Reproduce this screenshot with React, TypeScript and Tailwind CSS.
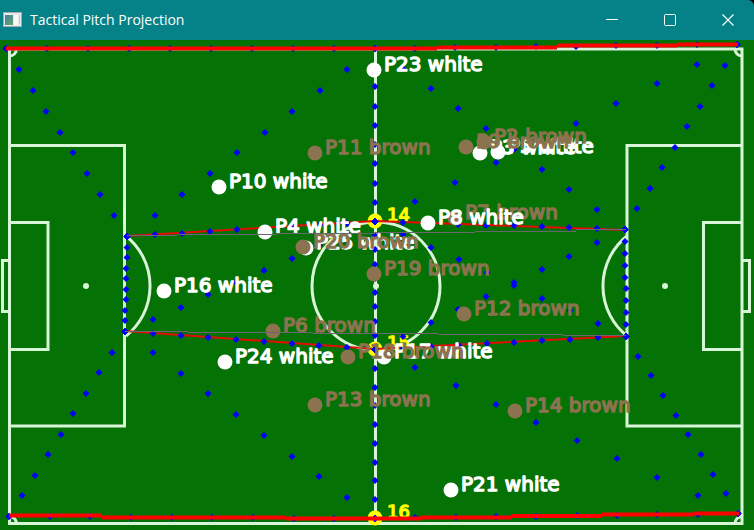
type Point = [number, number];

type Player = { id: number; team: "white" | "brown"; x: number; y: number };

const TOP_LEFT: Point = [6, 48];
const TOP_MID: Point = [375, 48];
const TOP_RIGHT: Point = [737, 44];
const BOX_LEFT_TOP: Point = [127, 236];
const BOX_LEFT_BOTTOM: Point = [125, 331];
const BOX_RIGHT_TOP: Point = [625, 229];
const BOX_RIGHT_BOTTOM: Point = [626, 336];
const CIRCLE_TOP: Point = [375, 221];
const CIRCLE_BOTTOM: Point = [375, 349];
const BOTTOM_LEFT: Point = [9, 516];
const BOTTOM_MID: Point = [375, 518];
const BOTTOM_RIGHT: Point = [738, 513];

// Pairs of keypoints joined by evenly spaced blue markers.
const EDGES: [Point, Point][] = [
  [TOP_LEFT, TOP_MID],
  [TOP_MID, TOP_RIGHT],
  [TOP_LEFT, BOX_LEFT_TOP],
  [TOP_MID, BOX_LEFT_TOP],
  [TOP_MID, BOX_RIGHT_TOP],
  [TOP_RIGHT, CIRCLE_TOP],
  [TOP_RIGHT, BOX_RIGHT_TOP],
  [TOP_MID, CIRCLE_TOP],
  [CIRCLE_TOP, CIRCLE_BOTTOM],
  [CIRCLE_BOTTOM, BOTTOM_MID],
  [BOX_LEFT_TOP, BOX_LEFT_BOTTOM],
  [BOX_RIGHT_TOP, BOX_RIGHT_BOTTOM],
  [BOX_LEFT_TOP, CIRCLE_TOP],
  [BOX_LEFT_BOTTOM, CIRCLE_TOP],
  [BOX_LEFT_BOTTOM, CIRCLE_BOTTOM],
  [BOX_LEFT_BOTTOM, BOTTOM_MID],
  [BOX_LEFT_BOTTOM, BOTTOM_LEFT],
  [CIRCLE_TOP, BOX_RIGHT_TOP],
  [CIRCLE_TOP, BOX_RIGHT_BOTTOM],
  [CIRCLE_BOTTOM, BOX_RIGHT_TOP],
  [CIRCLE_BOTTOM, BOX_RIGHT_BOTTOM],
  [CIRCLE_BOTTOM, BOTTOM_RIGHT],
  [BOX_RIGHT_BOTTOM, BOTTOM_RIGHT],
  [BOTTOM_LEFT, BOTTOM_MID],
  [BOTTOM_MID, BOTTOM_RIGHT],
];

const STEPS = 9;

const MARKERS: Point[] = EDGES.flatMap(([a, b]) =>
  Array.from({ length: STEPS + 1 }, (_, i): Point => [
    Math.round(a[0] + ((b[0] - a[0]) * i) / STEPS),
    Math.round(a[1] + ((b[1] - a[1]) * i) / STEPS),
  ]),
);

const KEYPOINTS = [
  { id: 14, at: CIRCLE_TOP },
  { id: 15, at: CIRCLE_BOTTOM },
  { id: 16, at: BOTTOM_MID },
];

const PLAYERS: Player[] = [
  { id: 7, team: "brown", x: 455, y: 218 },
  { id: 23, team: "white", x: 374, y: 70 },
  { id: 10, team: "white", x: 219, y: 187 },
  { id: 4, team: "white", x: 265, y: 232 },
  { id: 8, team: "white", x: 428, y: 223 },
  { id: 3, team: "white", x: 480, y: 153 },
  { id: 5, team: "white", x: 498, y: 152 },
  { id: 25, team: "white", x: 306, y: 248 },
  { id: 16, team: "white", x: 164, y: 291 },
  { id: 24, team: "white", x: 225, y: 362 },
  { id: 17, team: "white", x: 384, y: 357 },
  { id: 21, team: "white", x: 451, y: 490 },
  { id: 11, team: "brown", x: 315, y: 153 },
  { id: 9, team: "brown", x: 466, y: 147 },
  { id: 2, team: "brown", x: 484, y: 142 },
  { id: 20, team: "brown", x: 303, y: 247 },
  { id: 19, team: "brown", x: 374, y: 274 },
  { id: 12, team: "brown", x: 464, y: 314 },
  { id: 6, team: "brown", x: 273, y: 331 },
  { id: 18, team: "brown", x: 348, y: 357 },
  { id: 13, team: "brown", x: 315, y: 405 },
  { id: 14, team: "brown", x: 515, y: 411 },
];

const TEAM_CLASS = {
  white: "fill-white stroke-white",
  brown: "fill-[#8c7350] stroke-[#8c7350]",
};

function PitchLines() {
  return (
    <g className="fill-none stroke-[#d8f5d8]" strokeWidth="3">
      <rect x="9.5" y="49" width="732.5" height="474.5" />
      <path d="M375.5 49V523.5" />
      <path d="M9.5 145.5H124.5V426H9.5M742 145.5H627V426H742" />
      <path d="M9.5 222.5H48V349.5H9.5M742 222.5H703.5V349.5H742" />
      <path d="M9.5 260.5H2.5V311.5H9.5M742 260.5H749.5V311.5H742" />
      <circle cx="376" cy="286" r="64" />
      <path d="M126 236A64 64 0 0 1 126 336M627 236A64 64 0 0 0 627 336" />
      <path d="M16.5 49A7 7 0 0 1 9.5 56M735 49A7 7 0 0 0 742 56M9.5 516.5A7 7 0 0 1 16.5 523.5M742 516.5A7 7 0 0 0 735 523.5" />
      <g className="fill-[#d8f5d8] stroke-none">
        <circle cx="86" cy="286" r="3" />
        <circle cx="376" cy="286" r="3" />
        <circle cx="665" cy="286" r="3" />
      </g>
    </g>
  );
}

function Pitch() {
  return (
    <svg
      viewBox="0 40 754 490"
      className="block h-auto w-full bg-[#057205] font-['DejaVu_Sans',sans-serif]"
      role="img"
      aria-label="Player positions on the pitch"
    >
      <PitchLines />

      <g className="fill-[#ffff00] stroke-[#ffff00] text-lg">
        {KEYPOINTS.map(({ id, at }) => (
          <g key={id}>
            <circle cx={at[0]} cy={at[1]} r="7.5" strokeWidth="0" />
            <text x={at[0] + 12} y={at[1]} strokeWidth="1.3" strokeLinejoin="round">
              {id}
            </text>
          </g>
        ))}
      </g>

      <g className="fill-none stroke-[#e60c00]" strokeWidth="2">
        <path d="M127 236L375 221L625 230M125 331L375 349L626 336" />
      </g>

      <g className="fill-[#0000ff]">
        {MARKERS.map(([x, y], i) => (
          <path key={i} d={`M${x} ${y - 3}l3.5 3.5-3.5 3.5-3.5-3.5z`} />
        ))}
      </g>

      <g className="fill-none stroke-[#ff0000]" strokeWidth="4">
        <path d="M6 48.5H437M437 47.5H557M557 45.5H677M677 44.5H738" />
        <path d="M9 515.5H102M102 517.5H285M285 518.5H421M421 517.5H511M511 516H602M602 514.5H694M694 513.5H739" />
      </g>

      {PLAYERS.map(({ id, team, x, y }) => (
        <g key={id} className={TEAM_CLASS[team]}>
          <circle cx={x} cy={y} r="7.5" strokeWidth="0" />
          <text
            x={x + 10}
            y={y + 1}
            className="text-xl"
            strokeWidth="1.4"
            strokeLinejoin="round"
          >
            {`P${id} ${team}`}
          </text>
        </g>
      ))}

      <g className="fill-none stroke-[#6b6570]">
        <path d="M127 235.5H177M177 234.5H276M276 233.5H375M375 232.5H475M475 231.5H576M576 229.5H626" />
        <path d="M125 331.5H188M188 332.5H313M313 333.5H438M438 334.5H563M563 335.5H626" />
      </g>
    </svg>
  );
}

function AppIcon() {
  return (
    <svg width="19" height="16" viewBox="0 0 19 16" aria-hidden="true">
      <defs>
        <linearGradient id="app-screen" x1="0" y1="0" x2="1" y2="1">
          <stop offset="0" stopColor="#4b7fa6" />
          <stop offset="1" stopColor="#5fa86a" />
        </linearGradient>
      </defs>
      <rect x="0.5" y="0.5" width="18" height="14" fill="#e9eaec" stroke="#a9a9ad" />
      <rect x="2" y="3" width="8" height="10" fill="url(#app-screen)" />
      <rect x="11" y="3" width="4" height="10" fill="#f8f8f8" />
      <path d="M16.5 3V12" stroke="#c9c9cc" />
    </svg>
  );
}

const BUTTON = "flex h-10 w-12 items-center justify-center hover:bg-white/10";

function TitleBar() {
  return (
    <header className="flex h-10 items-center rounded-tr-md bg-[#048288] pl-[3px] pr-[2px] text-white">
      <AppIcon />
      <h1 className="ml-2 flex-1 truncate font-['Open_Sans','Noto_Sans',sans-serif] text-sm">
        Tactical Pitch Projection
      </h1>
      <div className="flex gap-[10px]">
        <button type="button" aria-label="Minimize" className={BUTTON}>
          <svg width="12" height="12" viewBox="0 0 12 12" fill="none" stroke="currentColor">
            <path d="M0 5.5H12" />
          </svg>
        </button>
        <button type="button" aria-label="Maximize" className={BUTTON}>
          <svg width="12" height="12" viewBox="0 0 12 12" fill="none" stroke="currentColor">
            <rect x="0.5" y="0.5" width="11" height="11" rx="1" />
          </svg>
        </button>
        <button type="button" aria-label="Close" className={BUTTON}>
          <svg width="12" height="12" viewBox="0 0 12 12" fill="none" stroke="currentColor" strokeWidth="1.2">
            <path d="M0.5 0.5L11.5 11.5M11.5 0.5L0.5 11.5" />
          </svg>
        </button>
      </div>
    </header>
  );
}

export default function App() {
  return (
    <div className="w-full bg-black">
      <TitleBar />
      <main>
        <Pitch />
      </main>
    </div>
  );
}
